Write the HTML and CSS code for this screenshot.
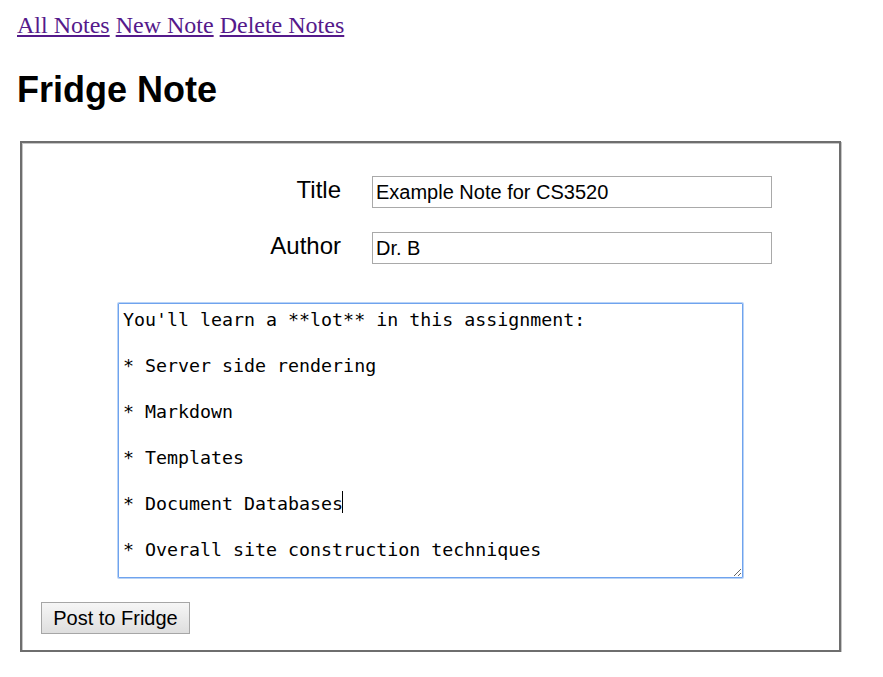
FILE: index.html
```html
<!DOCTYPE html>
<html lang="en">
<head>
<meta charset="utf-8">
<title>Fridge Note</title>
<link rel="stylesheet" href="styles.css">
</head>
<body>
<nav class="nav">
  <a class="nav-link" href="#all">All Notes</a>
  <a class="nav-link" href="#new">New Note</a>
  <a class="nav-link" href="#delete">Delete Notes</a>
</nav>
<h1 class="page-title">Fridge Note</h1>
<form class="note-form">
  <div class="fields">
    <label class="field-label" for="title">Title</label>
    <input class="field-input" id="title" type="text" value="Example Note for CS3520">
    <label class="field-label" for="author">Author</label>
    <input class="field-input" id="author" type="text" value="Dr. B">
  </div>
  <div class="body-wrap">
    <textarea class="note-body" spellcheck="false">You'll learn a **lot** in this assignment:

* Server side rendering

* Markdown

* Templates

* Document Databases

* Overall site construction techniques</textarea>
    <span class="caret"></span>
  </div>
  <button class="post-btn" type="button">Post to Fridge</button>
</form>
</body>
</html>
```

FILE: styles.css
```css
html, body {
  margin: 0;
  padding: 0;
  background: #ffffff;
}

body {
  padding: 12px 0 0 17px;
  font-family: "Liberation Serif", "Times New Roman", serif;
}

.nav {
  font-size: 24px;
  line-height: 27.6px;
}

.nav-link {
  color: #551a8b;
  text-decoration: underline;
}

.page-title {
  margin: 29px 0 0 0;
  font-family: "Liberation Sans", Arial, sans-serif;
  font-weight: bold;
  font-size: 36px;
  line-height: 41.4px;
  color: #000;
}

.note-form {
  box-sizing: border-box;
  width: 821px;
  margin: 31px 0 0 3px;
  padding: 33px 19px 16px 19px;
  border: 2px solid #6e6e6e;
  box-shadow: inset 1px 1px 0 #c6c6c6, 1px 1px 0 #c6c6c6;
  font-family: "Liberation Sans", Arial, sans-serif;
}

.fields {
  display: grid;
  grid-template-columns: 300px 400px;
  column-gap: 31px;
  row-gap: 24px;
  align-items: baseline;
}

.field-label {
  position: relative;
  top: -1px;
  text-align: right;
  font-size: 24px;
  line-height: 27.6px;
  color: #000;
}

.field-input {
  box-sizing: border-box;
  width: 400px;
  height: 32px;
  margin: 0;
  padding: 2px 3px 2px 3px;
  border: 1px solid #a9a9a9;
  border-radius: 0;
  font-family: "Liberation Sans", Arial, sans-serif;
  font-size: 20px;
  color: #000;
  background: #fff;
  outline: none;
}

.body-wrap {
  position: relative;
  width: 625px;
  margin: 39px auto 0 auto;
}

.note-body {
  display: block;
  box-sizing: border-box;
  width: 625px;
  height: 275px;
  margin: 0;
  padding: 4px 4px 4px 4px;
  border: 1px solid #6fa3ee;
  box-shadow: 0 0 0 1px #b9d3f6;
  border-radius: 1px;
  font-family: "DejaVu Sans Mono", "Liberation Mono", monospace;
  font-size: 18.3px;
  line-height: 23px;
  color: #000;
  background: #fff;
  outline: none;
  overflow: hidden;
}

.caret {
  position: absolute;
  left: 224px;
  top: 188px;
  width: 1px;
  height: 22px;
  background: #000;
}

.post-btn {
  display: block;
  box-sizing: border-box;
  width: 149px;
  height: 32px;
  margin: 24px 0 0 0;
  padding: 0;
  border: 1px solid #a6a6a6;
  border-radius: 0;
  background: linear-gradient(#f6f6f6, #dedede);
  font-family: "Liberation Sans", Arial, sans-serif;
  font-size: 20px;
  color: #000;
  text-align: center;
  white-space: nowrap;
}
```
